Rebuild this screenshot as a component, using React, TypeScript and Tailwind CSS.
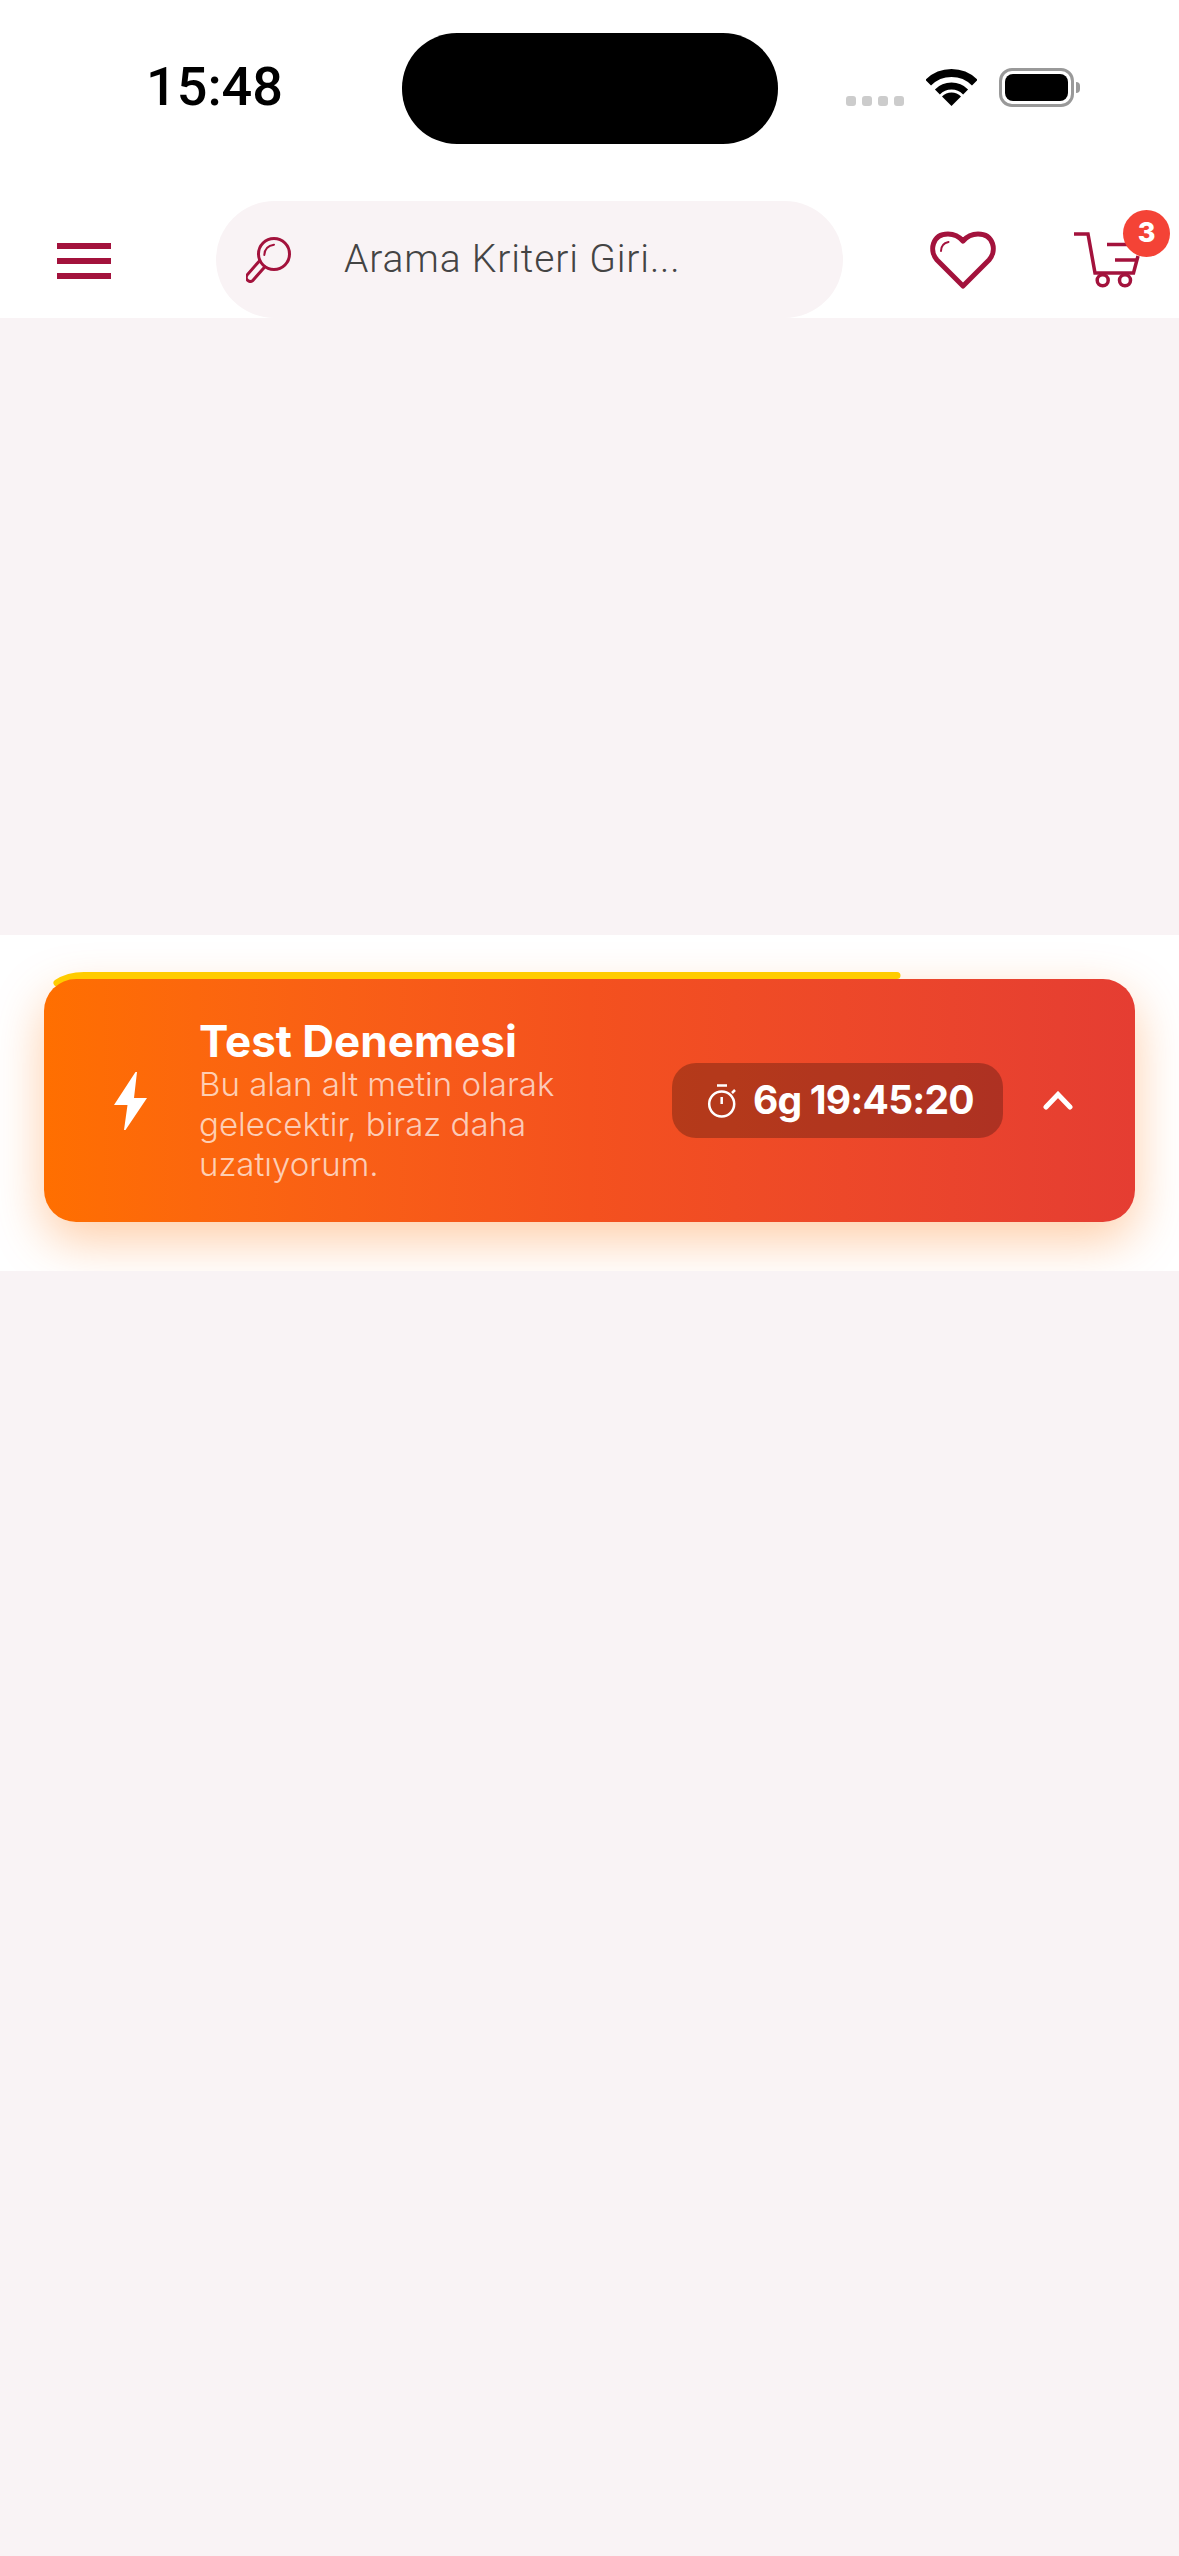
const crimson = "#A3123C";

function WifiIcon() {
  return (
    <svg width="51" height="37" viewBox="0 0 51 37" fill="none">
      <path d="M2.2 13.7A33 33 0 0 1 48.8 13.7" stroke="#000" strokeWidth="8" />
      <path d="M11.4 22.9A20 20 0 0 1 39.6 22.9" stroke="#000" strokeWidth="7" />
      <path d="M25.5 37L16 27.5A13.4 13.4 0 0 1 35 27.5Z" fill="#000" />
    </svg>
  );
}

function SearchIcon() {
  return (
    <svg width="46" height="46" viewBox="0 0 46 46" fill="none" stroke={crimson} strokeLinecap="round" strokeLinejoin="round">
      <circle cx="28" cy="17" r="15.500" strokeWidth="3" />
      <path d="M18.300 18C18.500 12 22.500 8.500 28 7.700" strokeWidth="2" />
      <path d="M12.700 24.700L1 38.100A4 4 0 0 0 7 43.300L18.700 29.900" strokeWidth="3" />
    </svg>
  );
}

function HeartIcon() {
  return (
    <svg width="66" height="58" viewBox="0 0 66 58" fill="none" stroke={crimson} strokeLinejoin="round" strokeLinecap="round">
      <path d="M33 55L7 29C-1 20 2 3 18 3C25 3 30 6.500 33 10C36 6.500 41 3 48 3C64 3 67 20 59 29Z" strokeWidth="5" />
      <path d="M11 20C11 15 14 12 18.500 11" strokeWidth="2" />
    </svg>
  );
}

function CartIcon() {
  return (
    <svg width="70" height="56" viewBox="0 0 70 56" fill="none" stroke={crimson} strokeWidth="3.500">
      <path d="M0 2H14L21 41H59.500L64 24" />
      <path d="M33 12.500H53M41 28H64" />
      <circle cx="28.700" cy="48.300" r="5.500" />
      <circle cx="51" cy="48.300" r="5.500" />
    </svg>
  );
}

function BoltIcon() {
  return (
    <svg width="33" height="58" viewBox="0 0 33 58" fill="#fff">
      <path d="M21.500 0H23L20 26H33L11.500 58H10L13.500 33H0Z" />
    </svg>
  );
}

function TimerIcon() {
  return (
    <svg width="30" height="34" viewBox="0 0 30 34" fill="none" stroke="#fff" strokeWidth="2.500">
      <circle cx="14.700" cy="20" r="12.500" />
      <path d="M10 1.500H20M14.700 13V20M25 9L28 6" />
    </svg>
  );
}

function ChevronIcon() {
  return (
    <svg width="30" height="19" viewBox="0 0 30 19" fill="none" stroke="#fff" strokeWidth="5" strokeLinecap="round">
      <path d="M3 16L15 3.500L27 16" />
    </svg>
  );
}

function AccentLine() {
  return (
    <svg width="860" height="24" viewBox="0 0 860 24" fill="none" stroke="#FFCC00" strokeWidth="7" strokeLinecap="round">
      <path d="M7 13Q18 5.500 34 5.500H847" />
    </svg>
  );
}

export default function App() {
  return (
    <div className="flex h-[2556px] w-[1179px] flex-col overflow-hidden bg-[#F9F3F5] font-['Inter',sans-serif]">
      {/* Status bar */}
      <div className="flex h-[201px] shrink-0 items-start bg-white pt-[33px]">
        <div className="mt-[22px] w-[402px] pl-[146px] font-['Roboto',sans-serif] text-[54px] leading-[64px] font-medium text-black">
          15:48
        </div>
        <div className="h-[111px] w-[376px] rounded-[55px] bg-black" />
        <div className="flex items-start">
          <div className="ml-[68px] mt-[63px] flex gap-[6px]">
            {[0, 1, 2, 3].map((i) => (
              <div key={i} className="h-[10px] w-[10px] rounded-[3px] bg-[#CCCCCC]" />
            ))}
          </div>
          <div className="ml-[22px] mt-[36px]">
            <WifiIcon />
          </div>
          <div className="ml-[22px] mt-[35px] flex items-center">
            <div className="h-[39px] w-[75px] rounded-[13px] border-[3px] border-[#999999] p-[3px]">
              <div className="h-full w-full rounded-[8px] bg-black" />
            </div>
            <div className="ml-[2px] h-[11px] w-[4px] rounded-r-full bg-[#999999]" />
          </div>
        </div>
      </div>

      {/* Header */}
      <div className="flex h-[117px] shrink-0 items-center bg-white">
        <div className="ml-[57px] flex w-[54px] flex-col gap-[9px] pt-[3px]">
          <div className="h-[6px] bg-[#A3123C]" />
          <div className="h-[6px] bg-[#A3123C]" />
          <div className="h-[6px] bg-[#A3123C]" />
        </div>
        <div className="ml-[105px] flex h-[117px] w-[627px] items-center rounded-full bg-[#F9F3F5]">
          <div className="ml-[30px]">
            <SearchIcon />
          </div>
          <div className="ml-[52px] font-['Roboto',sans-serif] text-[39px] font-light tracking-[0.85px] text-[#444444]">Arama Kriteri Giri...</div>
        </div>
        <div className="ml-[87px]">
          <HeartIcon />
        </div>
        <div className="relative ml-[78px]">
          <CartIcon />
          <div className="absolute -top-[22px] left-[49px] flex h-[47px] w-[47px] items-center justify-center rounded-full bg-[#F44336] text-[27px] font-extrabold text-white">
            3
          </div>
        </div>
      </div>

      <div className="h-[617px] shrink-0" />

      {/* Campaign banner */}
      <div className="h-[336px] shrink-0 overflow-hidden bg-white px-[44px] pt-[44px]">
        <div className="relative h-[243px]">
          <div className="absolute inset-0 rounded-[32px] shadow-[0_18px_50px_rgba(255,111,0,0.35)]" />
          <div className="absolute -top-[9px] left-[6px]">
            <AccentLine />
          </div>
          <div className="relative flex h-[243px] items-center rounded-[32px] bg-gradient-to-r from-[#FF6F00] via-[#F4511E] to-[#E53D32]">
            <div className="ml-[70px] shrink-0">
              <BoltIcon />
            </div>
            <div className="ml-[52px] w-[400px] shrink-0">
              <div className="text-[44px] leading-[46px] font-bold text-white">Test Denemesi</div>
              <div className="text-[33px] leading-[40px] font-light text-white/70">
                Bu alan alt metin olarak gelecektir, biraz daha uzatıyorum.
              </div>
            </div>
            <div className="ml-[73px] flex h-[75px] w-[331px] shrink-0 items-center rounded-[24px] bg-black/25 pl-[35px]">
              <TimerIcon />
              <div className="ml-[16px] text-[39px] font-bold tracking-[-0.8px] text-white">6g 19:45:20</div>
            </div>
            <div className="ml-[40px]">
              <ChevronIcon />
            </div>
          </div>
        </div>
      </div>
    </div>
  );
}
